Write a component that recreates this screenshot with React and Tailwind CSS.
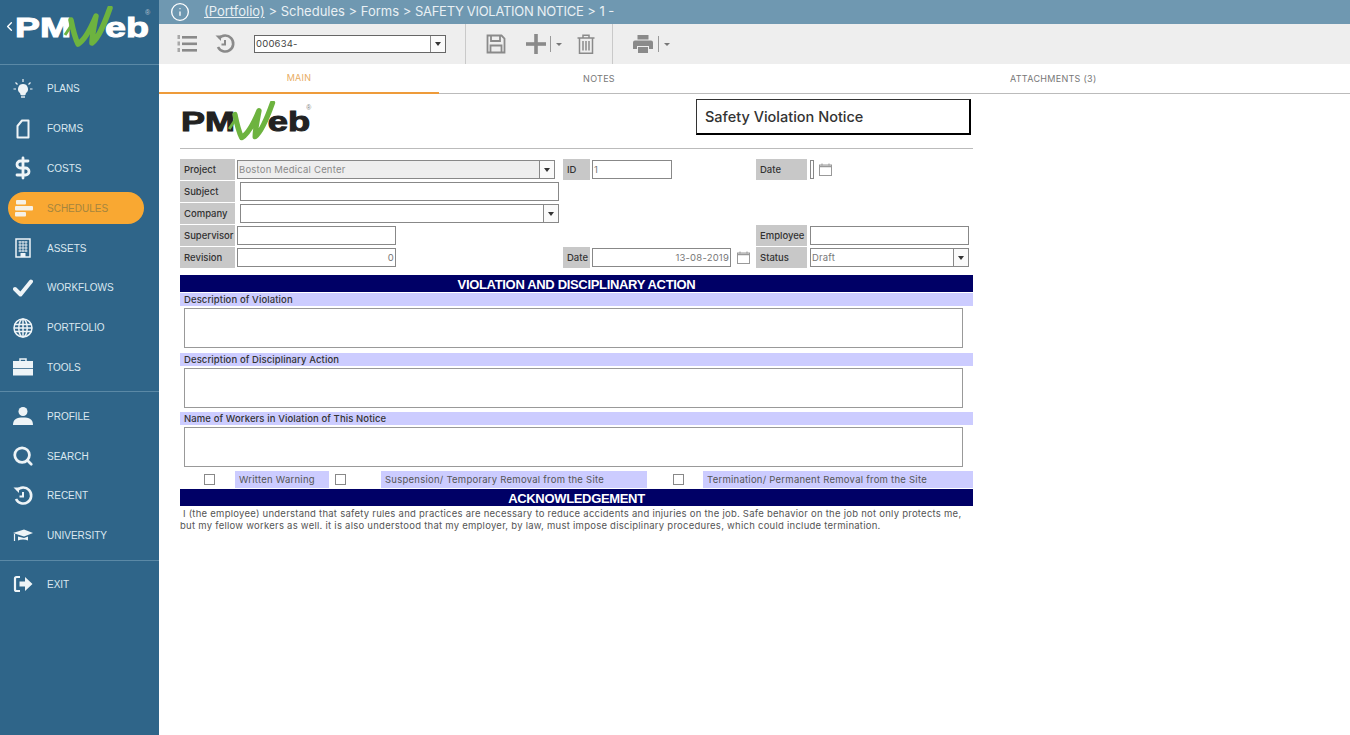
import { ChevronLeft, DollarSign, Search, Info } from 'lucide-react'

const F = "[font-family:Inter,'Open_Sans',sans-serif]"

function Logo({ width, color }) {
  return (
    <svg width={width} height={width * 0.32} viewBox="0 0 136 43.5" className="block shrink-0">
      <text x="0" y="31" fontFamily="Liberation Sans" fontWeight="700" fontSize="28" fill={color} stroke={color} strokeWidth="1" textLength="56" lengthAdjust="spacingAndGlyphs">PM</text>
      <text x="90" y="31" fontFamily="Liberation Sans" fontWeight="700" fontSize="28" fill={color} stroke={color} strokeWidth="1" textLength="44" lengthAdjust="spacingAndGlyphs">eb</text>
      <path d="M50 29 L56 20" stroke="#6db33f" strokeWidth="3" fill="none" />
      <path d="M56 14 C58 24 60 32 63 38 C70 34 76 22 81 10 C79 20 77 30 77 37 C84 32 90 16 95 2" stroke="#6db33f" strokeWidth="5.5" fill="none" strokeLinejoin="round" strokeLinecap="round" />
      <text x="130" y="9" fontFamily="Liberation Sans" fontSize="7" fill={color} opacity="0.6">®</text>
    </svg>
  )
}

const Ic = ({ children, fill = 'currentColor' }) => (
  <svg width="20" height="20" viewBox="0 0 20 20" fill={fill}>{children}</svg>
)

const NAV_TOP = [
  { label: 'PLANS', icon: <Ic><path d="M10 5a5 5 0 0 0-3 9l.6 2h4.800l.6-2a5 5 0 0 0-3-9z" /><rect x="8" y="16.500" width="4" height="2.500" rx="0.500" opacity=".7" /><path d="M10 0v3M2.500 3.500l2 2M17.500 3.500l-2 2M0.500 10h2.500M17 10h2.500" stroke="currentColor" strokeWidth="1.200" /></Ic> },
  { label: 'FORMS', icon: <Ic fill="none"><path d="M9 1.500h6.500v17h-11V7z" stroke="currentColor" strokeWidth="2" strokeLinejoin="round" /></Ic> },
  { label: 'COSTS', icon: <DollarSign size={24} strokeWidth={2.8} /> },
  { label: 'SCHEDULES', active: true, icon: <Ic><rect x="3" y="2" width="10" height="4.500" rx="1" /><rect x="2" y="8" width="18" height="4.500" rx="1" /><rect x="2" y="14" width="11" height="4.500" rx="1" /></Ic> },
  { label: 'ASSETS', icon: <Ic fill="none"><rect x="3" y="1" width="14" height="18" stroke="currentColor" strokeWidth="1.500" /><path d="M5.500 4h9M5.500 7h9M5.500 10h9M5.500 13h9M7 3v11M10 3v11M13 3v11" stroke="currentColor" strokeWidth="0.900" /><rect x="7.500" y="15" width="5" height="4" fill="currentColor" /></Ic> },
  { label: 'WORKFLOWS', icon: <Ic fill="none"><path d="M2 11l5.500 5.500L18 3.500" stroke="currentColor" strokeWidth="4" strokeLinecap="round" strokeLinejoin="round" /></Ic> },
  { label: 'PORTFOLIO', icon: <Ic fill="none"><g stroke="currentColor" strokeWidth="1.500"><circle cx="10" cy="10" r="9" /><ellipse cx="10" cy="10" rx="4.200" ry="9" /><path d="M10 1v18M1.500 6.500h17M1 10h18M1.500 13.500h17" /></g></Ic> },
  { label: 'TOOLS', icon: <Ic><path d="M7 4V2h6v2" fill="none" stroke="currentColor" strokeWidth="1.500" /><rect x="0" y="4" width="20" height="7" /><rect x="0" y="11.800" width="20" height="6.700" /></Ic> },
]

const NAV_MID = [
  { label: 'PROFILE', icon: <Ic><circle cx="10" cy="5.500" r="4.500" /><path d="M0 19c0-6 4-7.500 10-7.500s10 1.500 10 7.500z" /></Ic> },
  { label: 'SEARCH', icon: <Search size={22} strokeWidth={3} /> },
  { label: 'RECENT', icon: <Ic fill="none"><path d="M4 4.500A8 8 0 1 1 3 13" stroke="currentColor" strokeWidth="2.600" /><path d="M0.500 1.500h5.500v5.500z" fill="currentColor" /><path d="M10 6v4.500H6.500" stroke="currentColor" strokeWidth="2" /></Ic> },
  { label: 'UNIVERSITY', icon: <Ic><path d="M0 7l11-3.500L20 7l-9 3.500z" /><path d="M5 10.500v4c3-1.500 7-1.500 10 0v-4l-4 1.500z" /><path d="M1.500 8v7" stroke="currentColor" strokeWidth="1.200" /></Ic> },
]

const NAV_END = [
  { label: 'EXIT', icon: <Ic><path d="M7 3H3.500A1.500 1.500 0 0 0 2 4.500v11A1.500 1.500 0 0 0 3.500 17H7" fill="none" stroke="currentColor" strokeWidth="2.200" /><path d="M6.500 7.500H12V3l7.500 7-7.500 7v-4.500H6.500z" /></Ic> },
]

function NavItem({ item }) {
  return (
    <div className={`relative h-[39.8px] flex items-center ${item.active ? 'text-[#a5853e]' : 'text-[#dbe8f0]'}`}>
      {item.active && <div className="absolute left-2 top-[3.5px] w-[136px] h-[32px] rounded-full bg-[#f9a832]" />}
      <span className={`relative w-[47px] pr-px flex justify-center ${item.active ? 'text-[#f6f1e6]' : 'text-[#eef4f7]'}`}>{item.icon}</span>
      <span className="relative text-[10px] font-medium [font-family:'Liberation_Sans',sans-serif]">{item.label}</span>
    </div>
  )
}

function Sidebar() {
  return (
    <aside className="w-[159px] shrink-0 bg-[#2f6589] flex flex-col">
      <div className="h-[65px] border-b border-[#5b89a6] flex items-start pt-[6px] pl-[2px] text-white">
        <ChevronLeft size={15} strokeWidth={2.2} className="mt-[13px] mr-[-2px]" />
        <Logo width={136} color="#ffffff" />
      </div>
      <div className="pt-[4px] pb-[4px] border-b border-[#5b89a6]">
        {NAV_TOP.map(i => <NavItem key={i.label} item={i} />)}
      </div>
      <div className="pt-[4px] pb-[4px] border-b border-[#5b89a6]">
        {NAV_MID.map(i => <NavItem key={i.label} item={i} />)}
      </div>
      <div className="pt-[4px]">
        {NAV_END.map(i => <NavItem key={i.label} item={i} />)}
      </div>
    </aside>
  )
}

const Caret = ({ w = 'w-[15px]' }) => (
  <span className={`${w} self-stretch shrink-0 border-l border-[#888] bg-[#fafafa] flex items-center justify-center`}>
    <span className="w-0 h-0 border-x-[3.5px] border-x-transparent border-t-[4px] border-t-[#333]" />
  </span>
)

const SmallCaret = () => <span className="ml-[5px] w-0 h-0 border-x-[3px] border-x-transparent border-t-[3px] border-t-[#777]" />

function Toolbar() {
  return (
    <div className="h-[40px] bg-[#eeeeee] flex items-center text-[#8a8a8a]">
      <svg width="20" height="18" viewBox="0 0 20 18" fill="currentColor" className="ml-[18px]">
        <rect x="5" y="1" width="15" height="2.600" /><rect x="5" y="7.500" width="15" height="2.600" /><rect x="5" y="14" width="15" height="2.600" />
        <rect x="0.500" y="0" width="2.500" height="4" opacity=".7" /><rect x="0.500" y="6.500" width="2.500" height="4" opacity=".7" /><rect x="0.500" y="13" width="2.500" height="4" opacity=".7" />
      </svg>
      <svg width="20" height="20" viewBox="0 0 20 20" fill="none" className="ml-[18px]">
        <path d="M4 4.500A8 8 0 1 1 3 13" stroke="currentColor" strokeWidth="2.600" /><path d="M0.500 1.500h5.500v5.500z" fill="currentColor" /><path d="M10 6v4.500H6.500" stroke="currentColor" strokeWidth="2" />
      </svg>
      <div className={`ml-[19px] w-[192px] h-[18px] bg-white border border-[#666] flex items-center ${F}`}>
        <span className="flex-1 pl-[1px] text-[9.5px] tracking-[0.2px] text-[#444]">000634-</span>
        <Caret />
      </div>
      <div className="ml-[19px] w-px self-stretch bg-[#c9c9c9]" />
      <svg width="20" height="20" viewBox="0 0 20 20" fill="none" stroke="currentColor" strokeWidth="1.800" className="ml-[20px]">
        <path d="M1.500 1.500h14l3 3v14h-17z" /><path d="M5 1.500v5.500h9V1.500M4.500 18.500v-7h11v7" />
      </svg>
      <svg width="20" height="20" viewBox="0 0 20 20" fill="currentColor" className="ml-[20px]">
        <rect x="8.200" y="0" width="3.600" height="20" /><rect x="0" y="8.200" width="20" height="3.600" />
      </svg>
      <span className="ml-[4px] w-px h-[16px] bg-[#999]" />
      <SmallCaret />
      <svg width="18" height="20" viewBox="0 0 18 20" fill="none" stroke="currentColor" strokeWidth="1.500" className="ml-[15px]">
        <path d="M0.500 4h17M6 4V1.200h6V4M2.500 4v15.200h13V4M6 7v9.500M9 7v9.500M12 7v9.500" />
      </svg>
      <div className="ml-[17px] w-px self-stretch bg-[#c9c9c9]" />
      <svg width="20" height="18" viewBox="0 0 20 18" fill="currentColor" className="ml-[20px]">
        <rect x="4.500" y="0" width="11" height="4.500" /><path d="M2 5.500h16a2 2 0 0 1 2 2V14h-4v-3H4v3H0V7.500a2 2 0 0 1 2-2z" /><rect x="5" y="12" width="10" height="6" />
      </svg>
      <span className="ml-[5px] w-px h-[16px] bg-[#999]" />
      <SmallCaret />
    </div>
  )
}

function Tabs() {
  return (
    <div className={`h-[30px] flex text-[9px] tracking-[0.3px] pb-[2px] ${F}`}>
      <div className="w-[280px] flex items-center justify-center text-[#e8ac62] border-b-2 border-[#ee9b3a] -mb-[2px]">MAIN</div>
      <div className="w-[320px] flex items-center justify-center text-[#777] border-b border-[#bbb] -mb-[2px]">NOTES</div>
      <div className="flex-1 flex items-center text-[#777] border-b border-[#bbb] -mb-[2px] pl-[251px]">ATTACHMENTS (3)</div>
    </div>
  )
}

const Label = ({ w = 'w-[55px]', children }) => (
  <div className={`${w} h-[21px] shrink-0 bg-[#c8c8c8] flex items-center pl-[4px] pt-[2px] text-[9.5px] font-medium text-[#333] whitespace-nowrap`}>{children}</div>
)

const Input = ({ w, ml = 'ml-[2px]', right, children, gray, select }) => (
  <div className={`${w} ${ml} h-[19px] shrink-0 border border-[#888] flex items-center text-[9.5px] tracking-[0.2px] ${gray ? 'bg-[#eeeeee] text-[#8a8a8a]' : 'bg-white text-[#777]'}`}>
    <span className={`flex-1 px-[1px] pt-[2px] whitespace-nowrap ${right ? 'text-right' : ''}`}>{children}</span>
    {select && <Caret />}
  </div>
)

const Cal = ({ ml }) => (
  <svg width="13" height="13" viewBox="0 0 13 13" fill="none" stroke="#999" className={`${ml} shrink-0`}>
    <rect x="0.500" y="2" width="12" height="10.500" /><path d="M0.500 3.500h12" strokeWidth="1.500" /><path d="M3 0.500v2M10 0.500v2" />
  </svg>
)

const Sub = ({ children, mt }) => (
  <div className={`${mt} h-[13px] bg-[#ccccff] pl-[4px] pt-[2px] flex items-center text-[9.5px] font-medium tracking-[0.1px] text-[#333]`}>{children}</div>
)

const Area = () => <div className="mt-[2px] ml-[4px] w-[779px] h-[40px] bg-white border border-[#999]" />

const Band = ({ mt, children }) => (
  <div className={`${mt} h-[17px] pt-[2px] bg-[#000066] text-white flex items-center justify-center text-[13px] tracking-[-0.33px] font-bold [font-family:'Liberation_Sans',sans-serif]`}>{children}</div>
)

const Check = ({ ml }) => <span className={`${ml} w-[11px] h-[11px] shrink-0 bg-white border border-[#888]`} />

const Chip = ({ w, ml, children }) => (
  <div className={`${w} ${ml} self-stretch shrink-0 bg-[#ccccff] pl-[4px] pt-[2px] flex items-center text-[9.5px] tracking-[0.25px] text-[#555] whitespace-nowrap`}>{children}</div>
)

function Form() {
  return (
    <div className={`ml-[21px] w-[793px] ${F}`}>
      <div className="h-[54px] flex justify-between items-start border-b border-[#bbb] box-content">
        <div className="mt-[7px] ml-[1px]"><Logo width={131} color="#222222" /></div>
        <div className="mt-[5px] mr-[2px] w-[275px] h-[36px] border border-[#333] border-r-2 border-b-2 border-r-black border-b-black flex items-center pl-[8px] text-[14.5px] font-medium text-[#333]">Safety Violation Notice</div>
      </div>
      <div className="mt-[10px] flex flex-col gap-px">
        <div className="flex items-center">
          <Label>Project</Label>
          <Input w="w-[318px]" gray select>Boston Medical Center</Input>
          <Label w="w-[27px] ml-[8px]">ID</Label>
          <Input w="w-[80px]">1</Input>
          <Label w="w-[51px] ml-[84px]">Date</Label>
          <span className="ml-[3px] w-[4px] h-[19px] border border-[#888]" />
          <Cal ml="ml-[5px]" />
        </div>
        <div className="flex items-center">
          <Label>Subject</Label>
          <Input w="w-[319px]" ml="ml-[5px]" />
        </div>
        <div className="flex items-center">
          <Label>Company</Label>
          <Input w="w-[319px]" ml="ml-[5px]" select />
        </div>
        <div className="flex items-center">
          <Label>Supervisor</Label>
          <Input w="w-[159px]" />
          <Label w="w-[51px] ml-[360px]">Employee</Label>
          <Input w="w-[159px]" ml="ml-[3px]" />
        </div>
        <div className="flex items-center">
          <Label>Revision</Label>
          <Input w="w-[159px]" right>0</Input>
          <Label w="w-[27px] ml-[167px]">Date</Label>
          <Input w="w-[139px]" right>13-08-2019</Input>
          <Cal ml="ml-[6px]" />
          <Label w="w-[51px] ml-[6px]">Status</Label>
          <Input w="w-[159px]" ml="ml-[3px]" select>Draft</Input>
        </div>
      </div>
      <Band mt="mt-[7px]">VIOLATION AND DISCIPLINARY ACTION</Band>
      <Sub mt="mt-px">Description of Violation</Sub>
      <Area />
      <Sub mt="mt-[5px]">Description of Disciplinary Action</Sub>
      <Area />
      <Sub mt="mt-[4px]">Name of Workers in Violation of This Notice</Sub>
      <Area />
      <div className="mt-[4px] h-[17px] flex items-center">
        <Check ml="ml-[24px]" />
        <Chip w="w-[94px]" ml="ml-[20px]">Written Warning</Chip>
        <Check ml="ml-[6px]" />
        <Chip w="w-[266px]" ml="ml-[35px]">Suspension/ Temporary Removal from the Site</Chip>
        <Check ml="ml-[26px]" />
        <Chip w="w-[270px]" ml="ml-[19px]">Termination/ Permanent Removal from the Site</Chip>
      </div>
      <Band mt="mt-px">ACKNOWLEDGEMENT</Band>
      <p className="mt-[2px] text-[9.5px] leading-[12px] text-[#555] tracking-[0.25px]">
        &nbsp;I (the employee) understand that safety rules and practices are necessary to reduce accidents and injuries on the job. Safe behavior on the job not only protects me, but my fellow workers as well. it is also understood that my employer, by law, must impose disciplinary procedures, which could include termination.
      </p>
    </div>
  )
}

export default function App() {
  return (
    <div className="flex h-screen bg-white overflow-hidden">
      <Sidebar />
      <div className="flex-1 min-w-0 flex flex-col">
        <div className={`h-[24px] bg-[#6f98b1] flex items-center text-[#e9f0f4] text-[13px] ${F}`}>
          <Info size={20} strokeWidth={1.6} className="ml-[11px] text-white" />
          <span className="ml-[14px] whitespace-nowrap"><span className="underline">(Portfolio)</span> &gt; Schedules &gt; Forms &gt; <span className="tracking-[-0.3px]">SAFETY VIOLATION NOTICE</span> &gt; 1 -</span>
        </div>
        <Toolbar />
        <Tabs />
        <Form />
      </div>
    </div>
  )
}
